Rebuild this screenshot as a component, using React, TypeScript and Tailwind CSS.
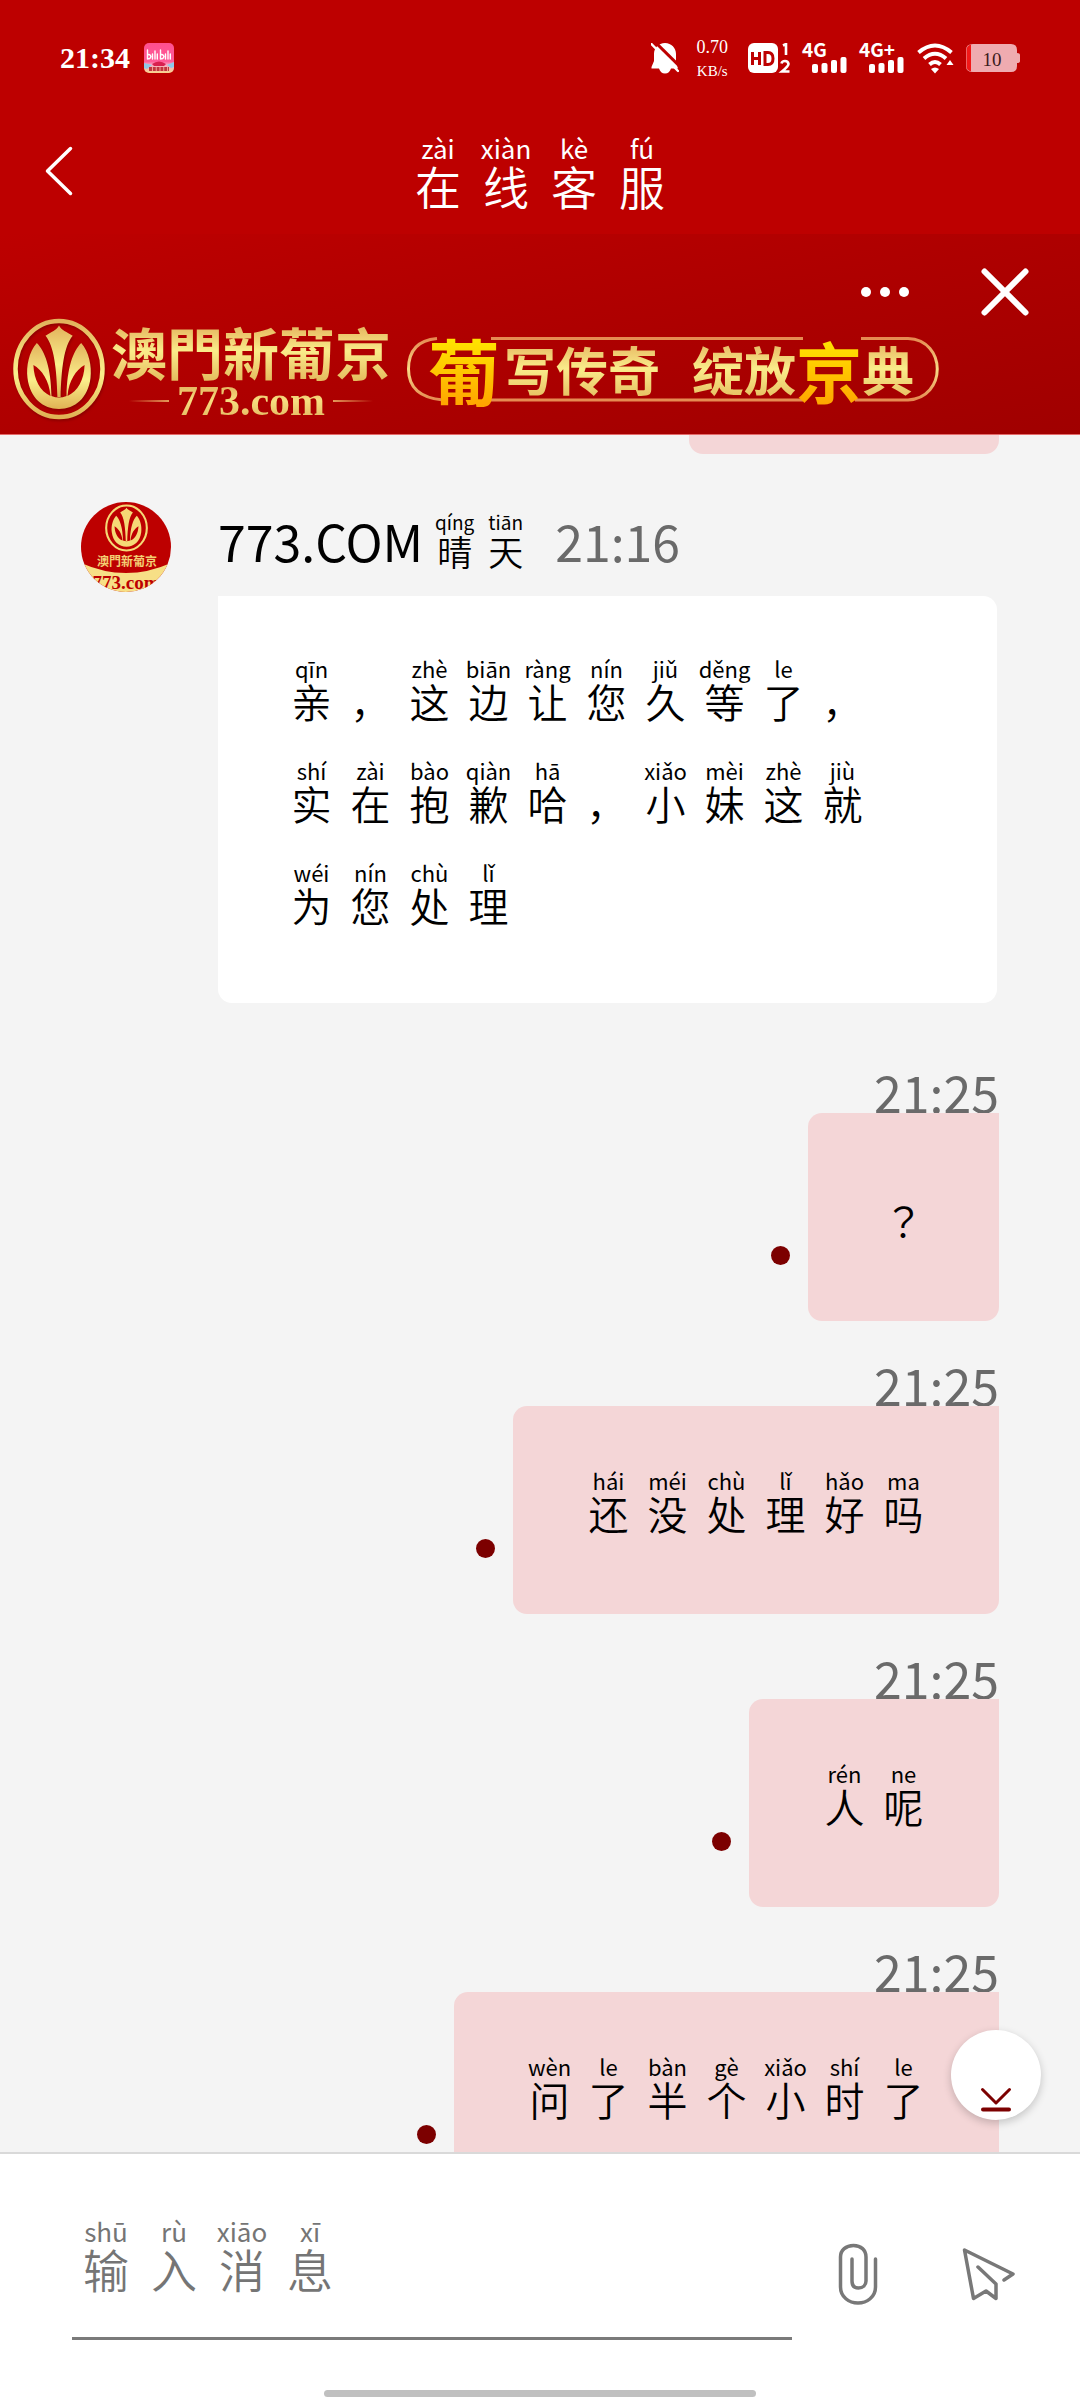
import { useId, useState } from "react";

type Glyph = [hanzi: string, pinyin?: string];

type Reply = {
  time: string;
  text: Glyph[];
};

const title: Glyph[] = [["在", "zài"], ["线", "xiàn"], ["客", "kè"], ["服", "fú"]];
const agent: Glyph[] = [["晴", "qíng"], ["天", "tiān"]];
const placeholder: Glyph[] = [["输", "shū"], ["入", "rù"], ["消", "xiāo"], ["息", "xī"]];

const agentLines: Glyph[][] = [
  [["亲", "qīn"], ["，"], ["这", "zhè"], ["边", "biān"], ["让", "ràng"], ["您", "nín"], ["久", "jiǔ"], ["等", "děng"], ["了", "le"], ["，"]],
  [["实", "shí"], ["在", "zài"], ["抱", "bào"], ["歉", "qiàn"], ["哈", "hā"], ["，"], ["小", "xiǎo"], ["妹", "mèi"], ["这", "zhè"], ["就", "jiù"]],
  [["为", "wéi"], ["您", "nín"], ["处", "chù"], ["理", "lǐ"]],
];

const replies: Reply[] = [
  { time: "21:25", text: [["？"]] },
  { time: "21:25", text: [["还", "hái"], ["没", "méi"], ["处", "chù"], ["理", "lǐ"], ["好", "hǎo"], ["吗", "ma"]] },
  { time: "21:25", text: [["人", "rén"], ["呢", "ne"]] },
  {
    time: "21:25",
    text: [["问", "wèn"], ["了", "le"], ["半", "bàn"], ["个", "gè"], ["小", "xiǎo"], ["时", "shí"], ["了", "le"]],
  },
];

const sizes = {
  sm: { cell: "w-[51px]", pinyin: "h-[22px] text-[19px] leading-[22px]", hanzi: "text-[35px] leading-[36px]" },
  md: { cell: "w-[59px]", pinyin: "h-7 text-[22px] leading-7", hanzi: "text-[40px] leading-[38px]" },
  lg: { cell: "w-[68px]", pinyin: "h-[30px] text-[26px] leading-[30px]", hanzi: "text-[46px] leading-[44px]" },
};

function Annotated({ text, size = "md" }: { text: Glyph[]; size?: keyof typeof sizes }) {
  const s = sizes[size];
  return (
    <span className="inline-flex">
      {text.map(([hanzi, pinyin], i) => (
        <span key={i} className={`flex flex-col items-center ${s.cell}`}>
          <span className={s.pinyin}>{pinyin}</span>
          {/* the TC face centres the full-width question mark in its cell */}
          <span className={`font-[350] ${s.hanzi} ${hanzi === "？" ? "font-['Noto_Sans_CJK_TC',sans-serif]" : ""}`}>{hanzi}</span>
        </span>
      ))}
    </span>
  );
}

function EmblemShapes({ fill, hole }: { fill: string; hole: string }) {
  return (
    <>
      <ellipse cx="46" cy="51" rx="43.5" ry="48" fill="none" stroke={fill} strokeWidth="4.5" />
      <path d="M23.8 25C16 34 13 48 14.5 60C17 80 30 91 46 91C62 91 75 80 77.5 60C79 48 76 34 68.2 25C60 33 54 50 53.5 78Q46 81 38.5 78C38 50 32 33 23.8 25Z" fill={fill} />
      <path d="M20.4 47C29 52 36 62 37.5 78C27 73 21 62 20.4 47ZM71.6 47C63 52 56 62 54.5 78C65 73 71 62 71.6 47Z" fill={hole} />
      <path d="M46 7.5C44 12 38 14 32.5 17.7C41 28 43.6 50 44.4 79H47.6C48.4 50 51 28 59.7 17.7C54 14 48 12 46 7.5Z" fill={fill} />
    </>
  );
}

function Emblem() {
  return (
    <svg width="92" height="102" viewBox="0 0 92 102" className="shrink-0 drop-shadow-[1px_2px_1px_#70000080]">
      <defs>
        <linearGradient id="emblem-gold" x1="0" y1="0" x2="0" y2="1">
          <stop offset="0" stopColor="#e2b25c" />
          <stop offset="0.55" stopColor="#fbf08c" />
          <stop offset="1" stopColor="#e0b254" />
        </linearGradient>
      </defs>
      <EmblemShapes fill="url(#emblem-gold)" hole="#b40000" />
    </svg>
  );
}

function Avatar() {
  return (
    <svg width="90" height="90" viewBox="0 0 90 90" className="shrink-0 rounded-full">
      <rect width="90" height="90" fill="#bd0000" />
      <svg x="24" y="2" width="43" height="48" viewBox="0 0 92 102">
        <EmblemShapes fill="#f5d976" hole="#bd0000" />
      </svg>
      <text x="46" y="64" textAnchor="middle" fontSize="12" fontWeight="700" fill="#f3cf73" className="font-['Noto_Sans_CJK_TC',sans-serif]">
        澳門新葡京
      </text>
      <path d="M0 61Q45 81 90 61V90H0Z" fill="#f7df86" />
      <text x="45" y="87" textAnchor="middle" fontSize="19" fontWeight="700" fill="#bd0000" className="font-['Liberation_Serif',serif]">
        773.com
      </text>
    </svg>
  );
}

function AppBadge() {
  return (
    <svg width="30" height="30" viewBox="0 0 30 30" className="rounded-[5px]">
      <defs>
        <linearGradient id="badge" x1="0" y1="0" x2="0" y2="1">
          <stop offset="0" stopColor="#ff4f8f" />
          <stop offset="0.62" stopColor="#ff5c98" />
          <stop offset="0.72" stopColor="#f7a6c4" />
          <stop offset="1" stopColor="#f9d58c" />
        </linearGradient>
      </defs>
      <rect width="30" height="30" fill="url(#badge)" />
      <path d="M0 20L8 22L3 26L0 25ZM30 19L23 22L27 25L30 24Z" fill="#8fc9e8" />
      <path d="M8 21Q15 16 22 21L20 23H10Z" fill="#d8204f" />
      <path d="M3.5 7V16M3.5 12.2A2 2 0 1 1 3.5 15.2M8.5 11V16M11 8V16M13.3 11V16M16.5 7V16M16.5 12.2A2 2 0 1 1 16.5 15.2M21.5 11V16M24 8V16M26.3 11V16" fill="none" stroke="#fff" strokeWidth="1.4" strokeLinecap="round" />
      <path d="M5 26H25" stroke="#c2343f" strokeWidth="4" strokeDasharray="3 0.8" />
    </svg>
  );
}

function Signal({ label }: { label: string }) {
  return (
    <svg width="44" height="31" viewBox="0 0 44 31" fill="#fff" className="overflow-visible">
      <text x="-1" y="14" fontSize="19" fontWeight="700" className="font-['Noto_Sans_CJK_SC',sans-serif]">
        {label}
      </text>
      <rect x="9" y="21" width="6" height="9" rx="2" />
      <rect x="18.5" y="20" width="6" height="10" rx="2" />
      <rect x="28" y="17" width="6" height="13" rx="2" />
      <rect x="37.5" y="14" width="6" height="16" rx="2" />
    </svg>
  );
}

function StatusBar() {
  return (
    <div className="flex h-[116px] items-center justify-between px-[60px] text-white">
      <div className="flex items-center gap-[14px]">
        <span className="font-['Liberation_Serif',serif] text-[30px] leading-none font-bold">21:34</span>
        <AppBadge />
      </div>
      <div className="flex items-center">
        <svg width="28" height="31" viewBox="0 0 28 31">
          <path d="M14 0C7.5 0 3 5 3 11V18L0.5 24V25.5H8C9 28.5 11 30.5 14 30.5S19 28.5 20 25.5H27L25 19V11C25 5 20.5 0 14 0Z" fill="#fff" />
          <path d="M1.5 -3.5L31.5 26" stroke="#bd0000" strokeWidth="3" />
          <path d="M0.5 1L27 28" stroke="#fff" strokeWidth="2.4" strokeLinecap="round" />
        </svg>
        <span className="ml-[18px] flex flex-col items-center pt-0.5 font-['Liberation_Serif',serif]">
          <span className="text-[18px] leading-6">0.70</span>
          <span className="text-[15px] leading-6">KB/s</span>
        </span>
        <svg width="43" height="31" viewBox="0 0 43 31" className="ml-5">
          <rect width="30" height="30" rx="6" fill="#fff" />
          <path d="M4.5 9V22M11.5 9V22M4.5 15.5H11.5M17 9.5H20Q25 9.5 25 15.5T20 21.5H17Z" fill="none" stroke="#bd0000" strokeWidth="3" />
          <path d="M35 2.5L38 1V12" fill="none" stroke="#fff" strokeWidth="2.6" />
          <path d="M33.5 20.5Q34 18 37 18T40.5 21Q40.5 23 34 28.5H41.5" fill="none" stroke="#fff" strokeWidth="2.6" />
        </svg>
        <span className="ml-3 flex gap-[13px]">
          <Signal label="4G" />
          <Signal label="4G+" />
        </span>
        <svg width="37" height="31" viewBox="0 0 37 31" fill="none" stroke="#fff" strokeWidth="4" className="ml-[13px]">
          <path d="M1.5 9.5Q18 -4.5 34.5 9.5" />
          <path d="M7 15.5Q18 6 29 15.5" />
          <path d="M12.5 21.5Q18 16.5 23.5 21.5" />
          <path d="M14 26Q18 23 22 26L18 30.5Z" fill="#fff" stroke="none" />
          <path d="M29.5 22L33 17L36.5 22Z" fill="#fff" stroke="none" />
        </svg>
        <svg width="54" height="28" viewBox="0 0 54 28" className="ml-3">
          <path d="M7 0H45Q51 0 51 6V9Q54 9 54 11V17Q54 19 51 19V22Q51 28 45 28H7Q0 28 0 22V6Q0 0 7 0Z" fill="#efabb0" />
          <path d="M5 0.5Q0.5 1.5 0.5 6V22Q0.5 26.5 5 27.5Z" fill="#f21818" />
          <text x="26" y="22" textAnchor="middle" fontSize="19" fill="#3b1b1c" className="font-['Liberation_Serif',serif]">
            10
          </text>
        </svg>
      </div>
    </div>
  );
}

function Banner() {
  return (
    <div className="border-b border-[#e46a6a] bg-linear-to-br from-[#bd0000] via-[#ae0000] to-[#a00000] pt-8 pb-[14px]">
      <div className="flex h-[52px] items-center justify-end gap-[50px] pr-10">
        <button type="button" aria-label="More" className="flex h-[52px] w-[70px] items-center justify-center">
          <svg width="50" height="10" viewBox="0 0 50 10" fill="#fff">
            <circle cx="6" cy="5" r="5" />
            <circle cx="25" cy="5" r="5" />
            <circle cx="44" cy="5" r="5" />
          </svg>
        </button>
        <button type="button" aria-label="Close" className="flex h-[52px] w-[70px] items-center justify-center">
          <svg width="48" height="48" viewBox="0 0 48 48" stroke="#fff" strokeWidth="6" strokeLinecap="round">
            <path d="M3.5 3.5L44.5 44.5M44.5 3.5L3.5 44.5" />
          </svg>
        </button>
      </div>
      <div className="flex items-end pl-[13px] font-['Noto_Sans_CJK_SC',sans-serif] font-bold">
        <Emblem />
        <div className="ml-[6px] flex flex-col items-center">
          <span className="bg-linear-to-b from-[#dfa955] via-[#faec8a] to-[#e3b95c] bg-clip-text font-['Noto_Sans_CJK_TC',sans-serif] text-[56px] leading-[62px] whitespace-nowrap text-transparent">
            澳門新葡京
          </span>
          <span className="flex items-center gap-2">
            <span className="h-0.5 w-10 bg-linear-to-r from-transparent to-[#e39a5a]" />
            <span className="bg-linear-to-b from-[#e0aa58] via-[#f7de80] to-[#e3b55e] bg-clip-text font-['Liberation_Serif',serif] text-[42px] leading-[38px] text-transparent">
              773.com
            </span>
            <span className="h-0.5 w-10 bg-linear-to-l from-transparent to-[#e39a5a]" />
          </span>
        </div>
        <div className="relative ml-4 flex h-[66px] w-[532px] items-center self-center pl-[21px] text-[52px] leading-[66px] whitespace-nowrap">
          <svg width="532" height="66" viewBox="0 0 532 66" fill="none" className="absolute inset-0">
            <defs>
              <linearGradient id="pill" x1="0" y1="0" x2="0" y2="1">
                <stop offset="0" stopColor="#e58b52" />
                <stop offset="0.5" stopColor="#f8d987" />
                <stop offset="1" stopColor="#e58b52" />
              </linearGradient>
            </defs>
            <path d="M30 2.5Q1.5 5 1.5 33T36 64M84 2.5H396M454 2.5H501C540 4 540 62 501 64H448M84 64H396" stroke="url(#pill)" strokeWidth="3" />
          </svg>
          <span className="relative bg-linear-to-b from-[#fff200] to-[#ff9d00] bg-clip-text text-[72px] leading-[88px] text-transparent">葡</span>
          <span className="relative ml-1 bg-linear-to-b from-[#e0aa58] via-[#faec8a] to-[#e3b95c] bg-clip-text text-transparent">写传奇</span>
          <span className="relative ml-8 bg-linear-to-b from-[#e0aa58] via-[#faec8a] to-[#e3b95c] bg-clip-text text-transparent">绽放</span>
          <span className="relative bg-linear-to-b from-[#fff200] to-[#ff9d00] bg-clip-text text-[66px] leading-[88px] text-transparent">京</span>
          <span className="relative bg-linear-to-b from-[#e0aa58] via-[#faec8a] to-[#e3b95c] bg-clip-text text-transparent">典</span>
        </div>
      </div>
    </div>
  );
}

function ReplyBubble({ time, text }: Reply) {
  return (
    <li className="flex flex-col items-end">
      <time className="pt-10 text-[50px] leading-[44px] text-[#6a6a6a]">{time}</time>
      <div className="flex items-end gap-[18px]">
        <span className="mb-14 size-[19px] rounded-full bg-[#7c0000]" />
        <p className="flex rounded-[14px] rounded-tr-none bg-[#f4d6d7] px-[66px] pt-[60px] pb-[82px]">
          <Annotated text={text} />
        </p>
      </div>
    </li>
  );
}

export default function App() {
  const [draft, setDraft] = useState("");
  const inputId = useId();

  return (
    <div className="flex h-screen flex-col overflow-hidden bg-[#f4f4f4] font-['Noto_Sans_CJK_SC',sans-serif] text-black">
      <header className="shrink-0 bg-[#bd0000]">
        <StatusBar />
        <div className="flex items-start justify-between px-[34px] pt-[17px] pb-[27px] text-white">
          <button type="button" aria-label="Back" className="-mb-2 flex h-[76px] w-[50px] items-center justify-center">
            <svg width="28" height="50" viewBox="0 0 28 50" fill="none" stroke="#fff" strokeWidth="3.5" strokeLinecap="round" strokeLinejoin="round">
              <path d="M25.5 2.5L2.5 25L25.5 47.5" />
            </svg>
          </button>
          <h1 className="flex">
            <Annotated text={title} size="lg" />
          </h1>
          <span className="w-[50px]" />
        </div>
        <Banner />
      </header>

      <div className="relative min-h-0 flex-1">
        <main className="h-full overflow-hidden px-[81px]">
          <div className="ml-auto h-[19px] w-[310px] rounded-b-[14px] bg-[#f4d6d7]" />

          <article className="mt-12 flex items-start gap-[47px] pr-0.5">
            <Avatar />
            <div className="flex-1">
              <div className="flex items-center pt-0.5 text-[50px] leading-[72px]">
                <span>773.COM</span>
                <span className="ml-1.5 flex">
                  <Annotated text={agent} size="sm" />
                </span>
                <time className="ml-6 text-[#6a6a6a]">21:16</time>
              </div>
              <div className="mt-5 flex flex-col gap-9 rounded-[14px] rounded-tl-none bg-white px-16 pt-[58px] pb-[79px]">
                {agentLines.map((line, i) => (
                  <p key={i} className="flex">
                    <Annotated text={line} />
                  </p>
                ))}
              </div>
            </div>
          </article>

          <ul className="mt-[26px] flex flex-col gap-px">
            {replies.map((reply, i) => (
              <ReplyBubble key={i} {...reply} />
            ))}
          </ul>
        </main>

        <button
          type="button"
          aria-label="Scroll to latest"
          className="absolute right-[39px] bottom-8 flex size-[90px] items-end justify-center rounded-full bg-white pb-[7px] shadow-[0_3px_8px_rgba(0,0,0,0.2)]"
        >
          <svg width="32" height="26" viewBox="0 0 32 26" fill="none" stroke="#7c0000" strokeWidth="3" strokeLinecap="round" strokeLinejoin="round">
            <path d="M2.5 2.5L16 16L29.5 2.5" />
            <path d="M3 22.5H29" strokeWidth="4" />
          </svg>
        </button>
      </div>

      <footer className="shrink-0 border-t-2 border-[#d9d9d9] bg-white pb-[3px]">
        <div className="flex items-start pr-[60px] pl-[72px]">
          <div className="grid flex-1 border-b-[3px] border-[#7a7a7a] pt-[62px] pb-[47px]">
            <label htmlFor={inputId} className="pointer-events-none flex text-[#757575] [grid-area:1/1]">
              <span className={draft ? "invisible flex" : "flex"}>
                <Annotated text={placeholder} size="lg" />
              </span>
            </label>
            <input
              id={inputId}
              value={draft}
              onChange={(e) => setDraft(e.target.value)}
              className="w-full bg-transparent text-[46px] leading-[74px] text-[#333] outline-none [grid-area:1/1]"
            />
          </div>
          <button type="button" aria-label="Attach a file" className="mt-[88px] ml-[34px] flex size-16 items-center justify-center">
            <svg width="40" height="62" viewBox="0 0 40 62" fill="none" stroke="#787878" strokeWidth="3.5" strokeLinecap="round">
              <path d="M37.5 16V44C37.5 54 29 60 20 60S2.5 54 2.5 44V14C2.5 7 8 2.5 15.5 2.5S28 7 28 14V38C28 42 25 45 20.5 45S14 42 14 38V16" />
            </svg>
          </button>
          <button type="button" aria-label="Send" className="mt-[88px] ml-[66px] flex size-16 items-center justify-center">
            <svg width="53" height="54" viewBox="0 0 53 54" fill="none" stroke="#787878" strokeWidth="3.5" strokeLinecap="round" strokeLinejoin="round">
              <path d="M42 33L51 27L2.5 3L11.5 51.5L24 44L34 51.5V37L16 20" />
            </svg>
          </button>
        </div>
        <div className="mx-auto mt-[50px] h-[7px] w-2/5 rounded-full bg-[#c0c0c0]" />
      </footer>
    </div>
  );
}
